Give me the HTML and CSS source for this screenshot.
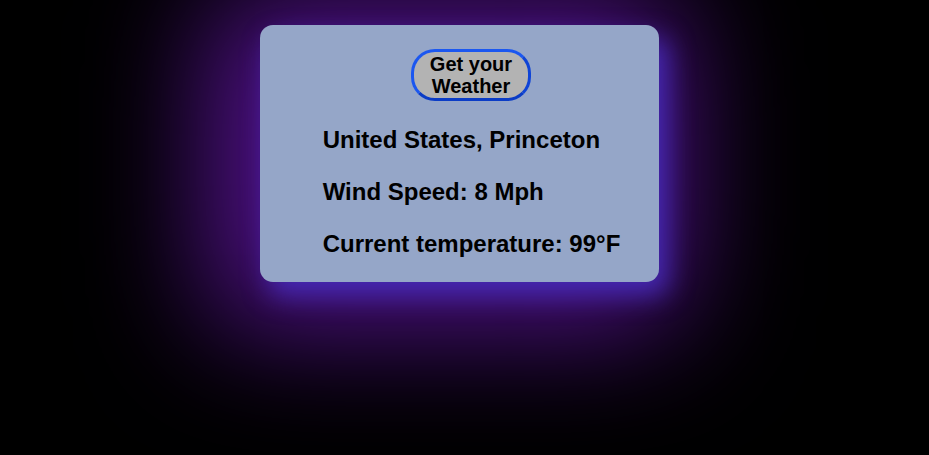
FILE: index.html
```html
<!DOCTYPE html>
<html>
<head>
<meta charset="utf-8">
<link rel="stylesheet" href="styles.css">
</head>
<body>
<div class="card">
  <div class="content">
    <button class="btn">Get your<br>Weather</button>
    <h2 class="line">United States, Princeton</h2>
    <h2 class="line">Wind Speed: 8 Mph</h2>
    <h2 class="line">Current temperature: 99°F</h2>
  </div>
</div>
</body>
</html>
```
FILE: styles.css
```css
html, body {
  margin: 0;
  height: 100%;
  background: #000;
  font-family: "Liberation Sans", Arial, sans-serif;
  overflow: hidden;
}
body {
  padding-top: 25px;
  box-sizing: border-box;
}
.card {
  width: 399px;
  height: 257px;
  margin-left: 260px;
  background: #95a6c8;
  border-radius: 13px;
  box-sizing: border-box;
  padding-top: 24px;
  display: flex;
  justify-content: center;
  padding-left: 24px;
  box-shadow: 9px 13px 26px #4529b4, -15px 8px 120px 40px #52128a;
}
.content {
  display: flex;
  flex-direction: column;
  align-items: flex-start;
}
.btn {
  align-self: center;
  width: 120px;
  height: 52px;
  margin-left: -1px;
  padding: 0;
  background: #b3b3b3;
  border: 3px solid #1b57f0;
  border-bottom-color: #0b3cc6;
  border-right-color: #0f44d6;
  border-radius: 24px;
  font-family: "Liberation Sans", Arial, sans-serif;
  font-weight: bold;
  font-size: 20px;
  line-height: 22px;
  color: #000;
}
.line {
  margin: 24px 0 0;
  font-size: 24px;
  line-height: 28px;
  font-weight: bold;
  color: #000;
}
.btn + .line { margin-top: 25px; }
```
